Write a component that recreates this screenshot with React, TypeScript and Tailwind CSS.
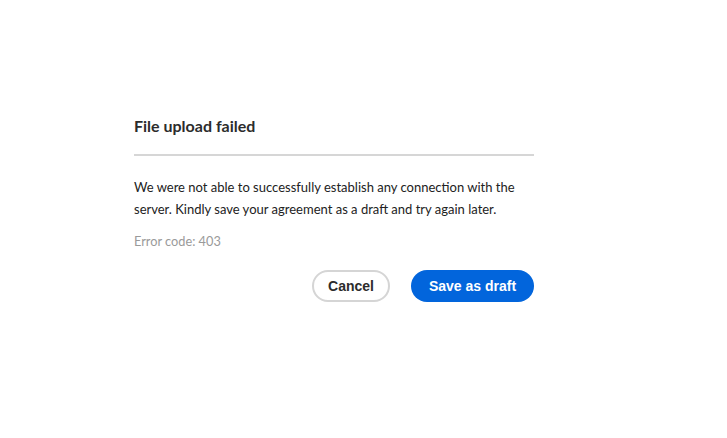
import React from "react";

const App = () => {
  return (
    <div className="min-h-[438px] w-full bg-white pl-[134px] pt-[117px] font-['Lato','Noto_Sans',sans-serif] text-[#222]">
      <div className="w-[400px]">
        <h2 className="text-[16px] font-bold leading-[18px] text-[#2c2c2c]">File upload failed</h2>
        <div className="mt-[19px] h-[2px] w-full bg-[#d6d6d6]" />
        <p className="mt-[20px] text-[13px] leading-[22px] text-[#222]">
          We were not able to successfully establish any connection with the server. Kindly save your agreement as a
          draft and try again later.
        </p>
        <p className="mt-[10px] text-[12.75px] leading-[22px] text-[#9a9a9a]">Error code: 403</p>
        <div className="mt-[18px] flex justify-end gap-[21px] font-['Liberation_Sans','Arial',sans-serif]">
          <button className="h-[32px] w-[78px] rounded-full border-2 border-[#d5d5d5] bg-white text-[14px] font-bold text-[#2c2c2c]">
            Cancel
          </button>
          <button className="h-[32px] w-[123px] rounded-full bg-[#0265dc] text-[14px] font-bold text-white">
            Save as draft
          </button>
        </div>
      </div>
    </div>
  );
};

export default App;
